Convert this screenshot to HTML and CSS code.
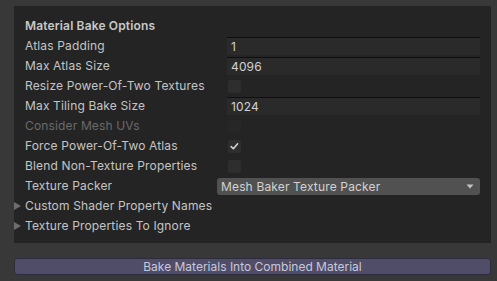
FILE: index.html
```html
<!DOCTYPE html>
<html>
<head>
<meta charset="utf-8">
<link rel="stylesheet" href="styles.css">
</head>
<body>
<div class="window">
  <div class="panel">
    <div class="row header">Material Bake Options</div>
    <div class="row"><span class="label">Atlas Padding</span><span class="field">1</span></div>
    <div class="row"><span class="label">Max Atlas Size</span><span class="field">4096</span></div>
    <div class="row"><span class="label">Resize Power-Of-Two Textures</span><span class="check"></span></div>
    <div class="row"><span class="label">Max Tiling Bake Size</span><span class="field">1024</span></div>
    <div class="row"><span class="label disabled">Consider Mesh UVs</span><span class="check disabled-check"></span></div>
    <div class="row"><span class="label">Force Power-Of-Two Atlas</span><span class="check"><svg width="13" height="13" viewBox="0 0 13 13"><path d="M3.2 6.6 L5.4 8.8 L9.6 3.8" fill="none" stroke="#d2d2d2" stroke-width="1.6" stroke-linecap="round" stroke-linejoin="round"/></svg></span></div>
    <div class="row"><span class="label">Blend Non-Texture Properties</span><span class="check"></span></div>
    <div class="row"><span class="label">Texture Packer</span><span class="dropdown"><span>Mesh Baker Texture Packer</span><svg width="8" height="5" viewBox="0 0 8 5"><path d="M0.5 0.5 L7.5 0.5 L4 4.5 Z" fill="#c4c4c4"/></svg></span></div>
    <div class="row foldout"><span class="tri"></span><span class="label">Custom Shader Property Names</span></div>
    <div class="row foldout"><span class="tri"></span><span class="label">Texture Properties To Ignore</span></div>
  </div>
  <div class="button">Bake Materials Into Combined Material</div>
</div>
</body>
</html>
```
FILE: styles.css
```css
html, body {
  margin: 0;
  padding: 0;
  background: #383838;
  width: 497px;
  height: 281px;
  overflow: hidden;
}
body {
  font-family: Inter, "Noto Sans", sans-serif;
  font-size: 12px;
  color: #c4c4c4;
  letter-spacing: 0.15px;
}
.window {
  padding: 6px 6px 0 14px;
}
.panel {
  background: #242424;
  padding: 10px 11px 7px 11px;
  display: flex;
  flex-direction: column;
}
.row {
  height: 20px;
  line-height: 20px;
  display: flex;
  align-items: center;
  white-space: nowrap;
}
.header {
  font-weight: 600;
  color: #c8c8c8;
}
.label {
  width: 202px;
  flex: none;
}
.label.disabled {
  color: #6a6a6a;
}
.field {
  flex: 1;
  height: 18px;
  line-height: 18px;
  box-sizing: border-box;
  background: #2a2a2a;
  border-top: 1px solid #0f0f0f;
  padding-left: 4px;
  color: #d2d2d2;
}
.check {
  width: 13px;
  height: 13px;
  margin-left: 1px;
  background: #2e2e2e;
  border-radius: 2px;
  display: flex;
}
.disabled-check {
  background: #272727;
}
.dropdown {
  flex: 1;
  margin-left: -10px;
  height: 17px;
  line-height: 17px;
  background: #515151;
  border-radius: 3px;
  padding: 0 6px 0 4px;
  display: flex;
  justify-content: space-between;
  align-items: center;
  color: #d2d2d2;
}
.foldout .tri {
  width: 0;
  height: 0;
  border-top: 4px solid transparent;
  border-bottom: 4px solid transparent;
  border-left: 7px solid #6e6e6e;
  margin-left: -11px;
  margin-right: 4px;
}
.foldout .label {
  width: auto;
}
.button {
  margin-top: 15px;
  height: 17px;
  line-height: 15px;
  box-sizing: border-box;
  background: #4f4d68;
  border: 1px solid #2d2c3c;
  border-radius: 3px;
  text-align: center;
  color: #c8c8dc;
  letter-spacing: 0;
}
```
